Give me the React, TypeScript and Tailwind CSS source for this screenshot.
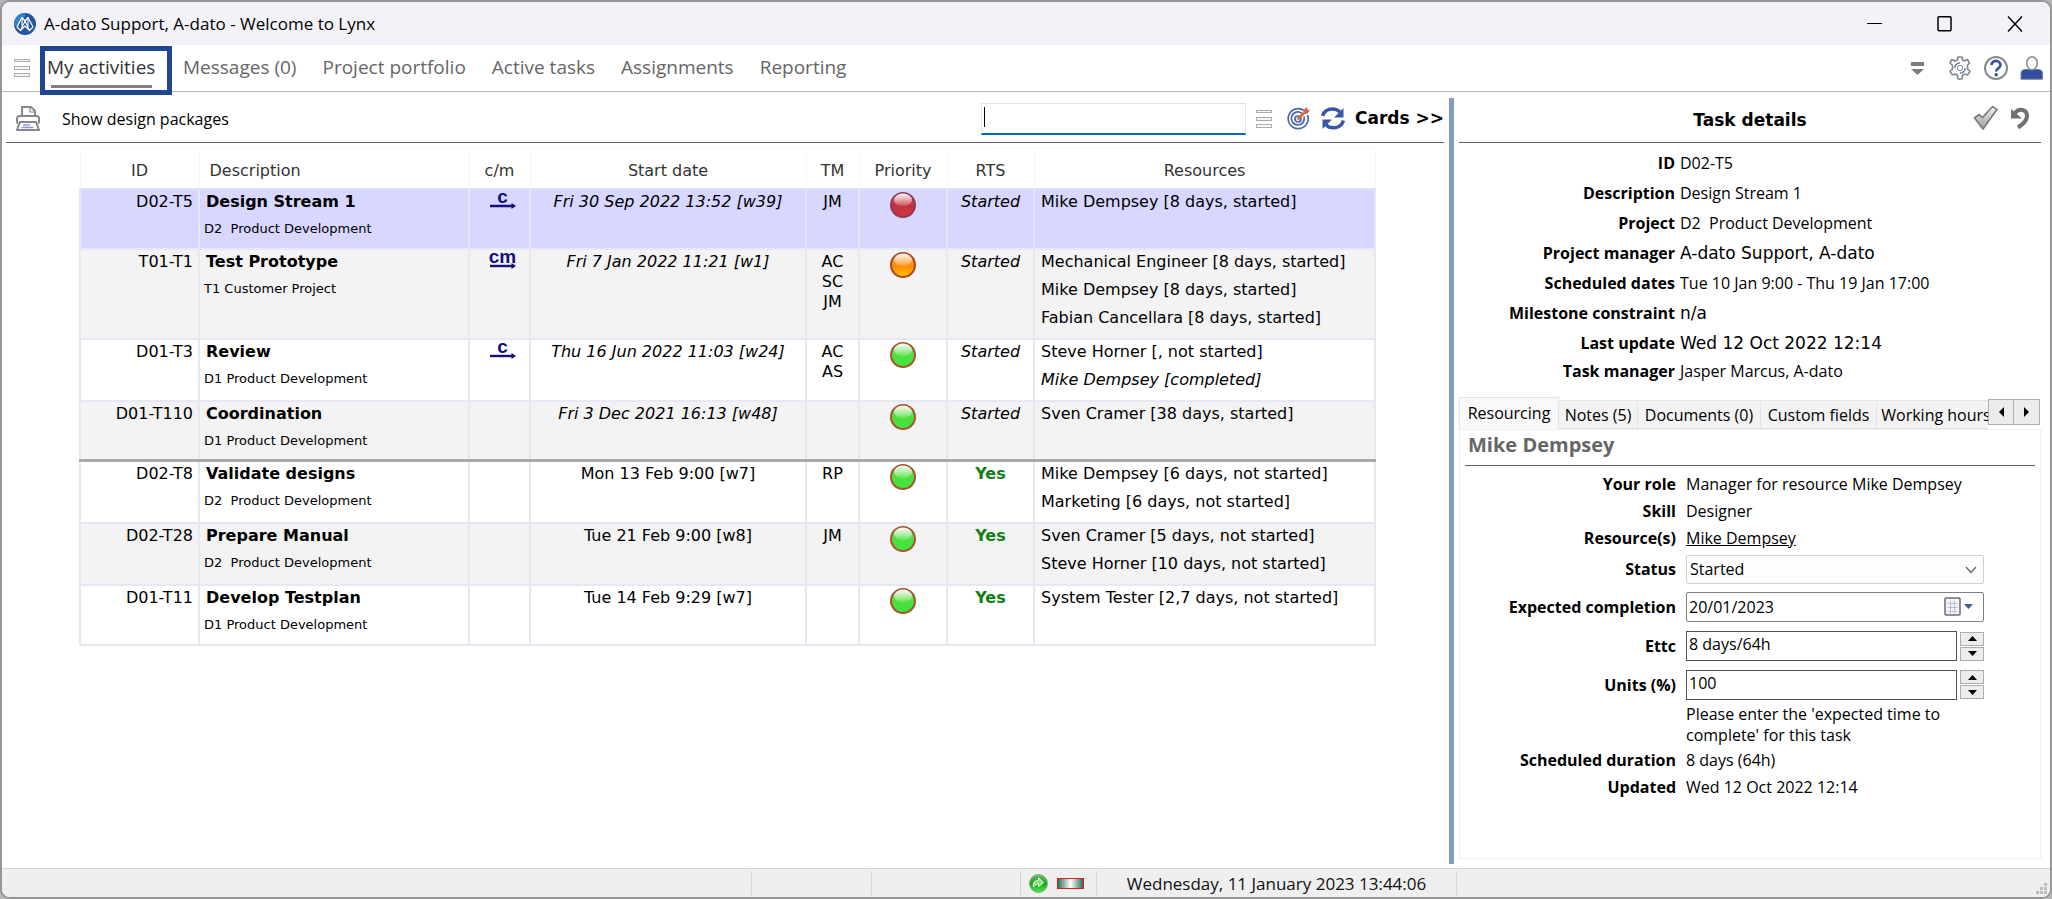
import type { ReactNode } from "react";

type Priority = "red" | "orange" | "green";

interface Task {
  id: string;
  name: string;
  project: string;
  chain?: "c" | "cm";
  start: string;
  managers: string[];
  priority: Priority;
  started: boolean;
  resources: { text: string; done?: boolean }[];
  height: string;
}

const tasks: Task[] = [
  { id: "D02-T5", name: "Design Stream 1", project: "D2\u00a0 Product Development", chain: "c", start: "Fri 30 Sep 2022 13:52 [w39]", managers: ["JM"], priority: "red", started: true, resources: [{ text: "Mike Dempsey [8 days, started]" }], height: "h-[60px]" },
  { id: "T01-T1", name: "Test Prototype", project: "T1 Customer Project", chain: "cm", start: "Fri 7 Jan 2022 11:21 [w1]", managers: ["AC", "SC", "JM"], priority: "orange", started: true, resources: [{ text: "Mechanical Engineer [8 days, started]" }, { text: "Mike Dempsey [8 days, started]" }, { text: "Fabian Cancellara [8 days, started]" }], height: "h-[90px]" },
  { id: "D01-T3", name: "Review", project: "D1 Product Development", chain: "c", start: "Thu 16 Jun 2022 11:03 [w24]", managers: ["AC", "AS"], priority: "green", started: true, resources: [{ text: "Steve Horner [, not started]" }, { text: "Mike Dempsey [completed]", done: true }], height: "h-[62px]" },
  { id: "D01-T110", name: "Coordination", project: "D1 Product Development", start: "Fri 3 Dec 2021 16:13 [w48]", managers: [], priority: "green", started: true, resources: [{ text: "Sven Cramer [38 days, started]" }], height: "h-[60px]" },
  { id: "D02-T8", name: "Validate designs", project: "D2\u00a0 Product Development", start: "Mon 13 Feb 9:00 [w7]", managers: ["RP"], priority: "green", started: false, resources: [{ text: "Mike Dempsey [6 days, not started]" }, { text: "Marketing [6 days, not started]" }], height: "h-[62px]" },
  { id: "D02-T28", name: "Prepare Manual", project: "D2\u00a0 Product Development", start: "Tue 21 Feb 9:00 [w8]", managers: ["JM"], priority: "green", started: false, resources: [{ text: "Sven Cramer [5 days, not started]" }, { text: "Steve Horner [10 days, not started]" }], height: "h-[62px]" },
  { id: "D01-T11", name: "Develop Testplan", project: "D1 Product Development", start: "Tue 14 Feb 9:29 [w7]", managers: [], priority: "green", started: false, resources: [{ text: "System Tester [2,7 days, not started]" }], height: "h-[60px]" },
];

const orbColours: Record<Priority, { rim: string; top: string; mid: string; low: string }> = {
  red: { rim: "#8f3a56", top: "#d8495a", mid: "#c2323c", low: "#cc3640" },
  orange: { rim: "#b0451f", top: "#f7a63a", mid: "#fb8a00", low: "#ffc400" },
  green: { rim: "#a8522f", top: "#74dd5c", mid: "#4adf3a", low: "#3fe545" },
};

function Orb({ priority }: { priority: Priority }) {
  const c = orbColours[priority];
  return (
    <svg width="26" height="26" viewBox="0 0 26 26" className="mx-auto block" role="img" aria-label={priority}>
      <defs>
        <linearGradient id={`body-${priority}`} x1="0" y1="0" x2="0" y2="1">
          <stop offset="0" stopColor={c.top} />
          <stop offset="0.55" stopColor={c.mid} />
          <stop offset="1" stopColor={c.low} />
        </linearGradient>
        <linearGradient id={`shine-${priority}`} x1="0" y1="0" x2="0" y2="1">
          <stop offset="0" stopColor="#fff" stopOpacity="0.95" />
          <stop offset="1" stopColor="#fff" stopOpacity="0.1" />
        </linearGradient>
      </defs>
      <circle cx="13" cy="13" r="12" fill={`url(#body-${priority})`} stroke={c.rim} strokeWidth="2" />
      <ellipse cx="13" cy="8" rx="9" ry="6.500" fill={`url(#shine-${priority})`} />
    </svg>
  );
}

function ChainMark({ kind }: { kind: "c" | "cm" }) {
  return (
    <div className="mx-auto flex w-[26px] flex-col items-center font-['Liberation_Sans',sans-serif] text-[19px] leading-[12px] font-bold text-[#14107c]">
      <span>{kind}</span>
      <svg width="26" height="6" viewBox="0 0 26 6">
        <path d="M0 3h24" stroke="#14107c" strokeWidth="2.400" />
        <path d="M21.500 0l4.500 3-4.500 3z" fill="#14107c" />
      </svg>
    </div>
  );
}

function Lines() {
  return (
    <svg width="16" height="18" viewBox="0 0 16 18" fill="#f4f5f7" stroke="#a9acb1">
      <rect x="0.5" y="0.5" width="15" height="2" />
      <rect x="0.5" y="7.5" width="15" height="3" />
      <rect x="0.5" y="14.5" width="15" height="3" />
    </svg>
  );
}

function Arrow({ dir }: { dir: "up" | "down" | "left" | "right" }) {
  const paths = { up: "M0 5L4.5 0 9 5z", down: "M0 0h9L4.5 5z", left: "M5 0v10L0 5z", right: "M0 0v10l5-5z" };
  const tall = dir === "left" || dir === "right";
  return (
    <svg width={tall ? 5 : 9} height={tall ? 10 : 5} fill="currentColor">
      <path d={paths[dir]} />
    </svg>
  );
}

function TitleBar() {
  return (
    <header className="flex h-[43px] shrink-0 items-center bg-[#f2f2f8] pl-3">
      <svg width="22" height="22" viewBox="0 0 22 22">
        <circle cx="11" cy="11" r="11" fill="#2456a4" />
        <path d="M0 11A11 11 0 0 1 11 0v3L2 14z" fill="#2f86c4" />
        <path d="M3 14L8 4.500l3 3.500 3-3.500 5 9.500" fill="none" stroke="#fff" strokeWidth="1.200" strokeLinejoin="round" />
        <path d="M8 4.500V14M14 4.500V14M3 14l3.500 3.500L11 8l4.500 9.500L19 14M6.500 17.500L11 13l4.500 4.500" fill="none" stroke="#fff" strokeWidth="1.100" />
      </svg>
      <h1 className="ml-2 text-[17px] text-black">A-dato Support, A-dato - Welcome to Lynx</h1>
      <div className="ml-auto flex gap-[10px] pr-[5px]">
        <button aria-label="Minimize" className="flex h-[43px] w-[60px] items-center justify-center">
          <svg width="16" height="16"><path d="M0 7.500h15" stroke="#000" strokeWidth="1.200" /></svg>
        </button>
        <button aria-label="Maximize" className="flex h-[43px] w-[60px] items-center justify-center">
          <svg width="16" height="16"><rect x="1" y="0.800" width="13" height="14" rx="1" fill="none" stroke="#000" strokeWidth="1.500" /></svg>
        </button>
        <button aria-label="Close" className="flex h-[43px] w-[60px] items-center justify-center">
          <svg width="16" height="16"><path d="M1 0.500l14 15M15 0.500l-14 15" stroke="#000" strokeWidth="1.400" /></svg>
        </button>
      </div>
    </header>
  );
}

function MenuBar() {
  const items = ["Messages (0)", "Project portfolio", "Active tasks", "Assignments", "Reporting"];
  return (
    <nav className="flex h-[47px] shrink-0 items-start border-b border-[#b8b8b8] text-[19px] leading-[26px]">
      <button aria-label="Menu" className="mt-[14px] ml-3"><Lines /></button>
      <div className="relative z-10 mt-px ml-[10px] h-[49px] w-[132px] shrink-0 border-[5px] border-[#1f4690]">
        <a href="#activities" className="flex h-full flex-col pl-[2px] text-[#333]">
          <span className="mt-[3px]">My activities</span>
          <span className="mt-[5px] ml-1 h-[3px] w-[101px] bg-[#808080]" />
        </a>
      </div>
      <div className="ml-[11px] flex gap-[26px] pt-[9px] text-[#666]">
        {items.map((t) => <a key={t} href="#tab">{t}</a>)}
      </div>
      <div className="ml-auto flex items-center pt-[11px] pr-[6px]">
        <button aria-label="Show more" className="mr-6">
          <svg width="14" height="15" fill="#7b7e82"><path d="M1 1h13v4H1zM1 8h13l-6.500 6z" /></svg>
        </button>
        <button aria-label="Settings" className="mr-3">
          <svg width="24" height="24" viewBox="0 0 24 24" fill="none">
            <path d="M10 1h4l.5 3 2 1 3-1.500 2 3.500-2 2v4l2.500 2.500-2.500 3.500-3-1-2 1.200-.5 3.800h-4l-.5-3.800-2-1.200-3 1L2 15.500 4.500 13V9.500L2 7l2-3.500L7 5l2.500-1z" stroke="#86898e" strokeWidth="1.700" strokeLinejoin="round" />
            <path d="M17.200 12A5.200 5.200 0 0 1 12 17.200M6.800 12A5.200 5.200 0 0 1 12 6.800" stroke="#4561b4" strokeWidth="1.200" />
            <circle cx="12" cy="12" r="2.700" stroke="#86898e" />
          </svg>
        </button>
        <button aria-label="Help" className="mr-3">
          <svg width="24" height="24" viewBox="0 0 24 24" fill="none">
            <circle cx="12" cy="12" r="11" stroke="#86898e" strokeWidth="2" />
            <path d="M7.500 9a4.500 4 0 1 1 7 3.200c-1.700 1.100-2.300 1.600-2.300 3.300" stroke="#314f9f" strokeWidth="2.600" />
            <circle cx="12.200" cy="18.800" r="1.700" fill="#314f9f" />
          </svg>
        </button>
        <button aria-label="Account">
          <svg width="24" height="24" viewBox="0 0 24 24">
            <path d="M1 23.200v-6c0-2.500 2-3.700 4-3.700h13.500c2 0 4 1.200 4 3.700v6z" fill="#314f9f" stroke="#70809e" />
            <ellipse cx="12" cy="7.300" rx="5.300" ry="6.500" fill="#fff" stroke="#86898e" strokeWidth="1.500" />
          </svg>
        </button>
      </div>
    </nav>
  );
}

function Toolbar() {
  return (
    <div className="mr-[5px] ml-1 flex h-[51px] shrink-0 items-center border-b border-[#606060] pt-[3px]">
      <button aria-label="Print" className="ml-[10px]">
        <svg width="24" height="25" viewBox="0 0 24 25" fill="none" stroke="#86898e" strokeWidth="2">
          <path d="M6 10V1h9l4 4v5" />
          <path d="M14 1v5h5" strokeWidth="1.200" />
          <path d="M2 17.500A2 2 0 0 1 1 16v-3.500A2.500 2.500 0 0 1 3.500 10h17a2.500 2.500 0 0 1 2.500 2.500V16a2 2 0 0 1-1 1.500" />
          <path d="M4 16h16l3 8H1z" fill="#fff" />
          <path d="M7 19h7M5.500 21.500h12" stroke="#8a9ccf" strokeWidth="1.500" />
        </svg>
      </button>
      <a href="#packages" className="ml-[22px] text-[16px] text-black">Show design packages</a>
      <div className="relative ml-auto">
        <input aria-label="Search" className="block h-8 w-[265px] border border-b-2 border-[#e3e3e3] border-b-[#0067c0] bg-white px-1 outline-none" />
        <span className="absolute top-1 left-[3px] h-5 w-px bg-black" />
      </div>
      <button aria-label="List options" className="ml-[10px]"><Lines /></button>
      <button aria-label="Focus" className="ml-[15px]">
        <svg width="23" height="23" viewBox="0 0 23 23" fill="none" stroke="#4a66b0" strokeWidth="1.700">
          <path d="M17 3.500A10 10 0 1 0 20.500 8" />
          <path d="M15 6.500A6.500 6.500 0 1 0 17 9.500" />
          <circle cx="11" cy="12" r="3" />
          <path d="M10.500 12.500L17 6" stroke="#d9694b" strokeWidth="2.600" />
          <path d="M16 7l.5-4L20 0l.5 2.500L23 3.500 20 7z" fill="#d9694b" stroke="none" />
        </svg>
      </button>
      <button aria-label="Refresh" className="ml-[11px]">
        <svg width="24" height="23" viewBox="0 0 24 23" fill="none" stroke="#3a57a7" strokeWidth="3.500">
          <path d="M1.500 9C3 4 7 2 11.500 2c3.500 0 6 1.500 7.500 3" />
          <path d="M22.500 13.500C21 18.500 17 20.800 12.500 20.800c-3.500 0-6-1.300-7.500-3" />
          <path d="M22.500 1v9.500H13z M1.500 22v-9.500H11z" fill="#3a57a7" stroke="none" />
        </svg>
      </button>
      <button className="ml-[10px] font-['DejaVu_Sans',sans-serif] text-[17px] font-bold text-black">Cards &gt;&gt;</button>
    </div>
  );
}

function TaskTable() {
  const cell = "border-2 border-[#e6e9f3] align-top";
  return (
    <table className="w-full table-fixed border-collapse font-['DejaVu_Sans',sans-serif] text-[16px] leading-5 text-black">
      <colgroup>
        <col className="w-[119px]" />
        <col className="w-[270px]" />
        <col className="w-[61px]" />
        <col className="w-[276px]" />
        <col className="w-[53px]" />
        <col className="w-[88px]" />
        <col className="w-[87px]" />
        <col />
      </colgroup>
      <thead>
        <tr className="h-10 text-[#333]">
          {["ID", "Description", "c/m", "Start date", "TM", "Priority", "RTS", "Resources"].map((h, i) => (
            <th key={h} className={`border border-b-2 border-[#f6f6fa] border-b-[#dbe3ee] pt-[5px] font-normal ${i === 1 ? "pl-[10px] text-left" : "text-center"}`}>{h}</th>
          ))}
        </tr>
      </thead>
      <tbody>
        {tasks.map((t, i) => {
          const bg = i === 0 ? "bg-[#d7d7ff]" : i % 2 ? "bg-[#f3f3f3]" : "bg-white";
          const edge = i === 3 ? "border-b-[3px] border-b-[#a9a9a9]" : "";
          const c = `${cell} ${i === 0 ? "border-[#d3d6f3]" : ""} ${edge}`;
          return (
            <tr key={t.id} className={`${t.height} ${bg}`}>
              <td className={`${c} pt-[2px] pr-[5px] text-right`}>{t.id}</td>
              <td className={`${c} pt-[2px] pl-[4px]`}>
                <div className="pl-[2px] font-bold">{t.name}</div>
                <div className="mt-[7px] text-[13px]">{t.project}</div>
              </td>
              <td className={`${c} pt-px pl-[6px]`}>{t.chain && <ChainMark kind={t.chain} />}</td>
              <td className={`${c} pt-[2px] text-center ${t.started ? "italic" : ""}`}>{t.start}</td>
              <td className={`${c} pt-[2px] text-center`}>{t.managers.map((m) => <div key={m}>{m}</div>)}</td>
              <td className={`${c} pt-[2px]`}><Orb priority={t.priority} /></td>
              <td className={`${c} pt-[2px] text-center`}>
                {t.started ? <em>Started</em> : <strong className="text-[#108010]">Yes</strong>}
              </td>
              <td className={`${c} pt-[2px] pl-[6px]`}>
                {t.resources.map((r) => (
                  <div key={r.text} className={`mb-2 last:mb-0 ${r.done ? "italic" : ""}`}>{r.text}</div>
                ))}
              </td>
            </tr>
          );
        })}
      </tbody>
    </table>
  );
}

function Spinner({ label }: { label: string }) {
  return (
    <div className="ml-[3px] flex flex-col gap-px">
      <button aria-label={`${label} up`} className="flex h-[14px] w-6 items-center justify-center border border-[#adadad] bg-[#ececec]"><Arrow dir="up" /></button>
      <button aria-label={`${label} down`} className="flex h-[14px] w-6 items-center justify-center border border-[#adadad] bg-[#ececec]"><Arrow dir="down" /></button>
    </div>
  );
}

function Row({ label, id, height, children }: { label: string; id?: string; height: string; children: ReactNode }) {
  return (
    <div className={`grid grid-cols-[216px_1fr] items-center gap-x-[10px] ${height}`}>
      {id ? <label htmlFor={id} className="text-right font-bold">{label}</label> : <span className="text-right font-bold">{label}</span>}
      <div className="flex items-center">{children}</div>
    </div>
  );
}

function Details() {
  const verdana = "font-['DejaVu_Sans',sans-serif] text-[17px]";
  const facts: [string, string, string][] = [
    ["ID", "D02-T5", ""],
    ["Description", "Design Stream 1", ""],
    ["Project", "D2\u00a0 Product Development", ""],
    ["Project manager", "A-dato Support, A-dato", verdana],
    ["Scheduled dates", "Tue 10 Jan 9:00 - Thu 19 Jan 17:00", ""],
    ["Milestone constraint", "n/a", verdana],
    ["Last update", "Wed 12 Oct 2022 12:14", verdana],
    ["Task manager", "Jasper Marcus, A-dato", ""],
  ];
  const tab = "h-[29px] shrink-0 border border-l-0 border-[#e5e5e5] bg-[#f3f3f3]";
  return (
    <aside className="flex w-[596px] shrink-0 flex-col pr-[9px] pl-[5px] text-[16px] leading-5 text-black">
      <div className="relative flex h-[51px] shrink-0 items-center justify-center border-b border-[#606060] pt-[5px]">
        <h2 className="font-['DejaVu_Sans',sans-serif] text-[17px] font-bold">Task details</h2>
        <div className="absolute top-[13px] right-[10px] flex gap-3">
          <button aria-label="Apply">
            <svg width="25" height="25" viewBox="0 0 25 25">
              <defs>
                <linearGradient id="tick" x1="0" y1="0" x2="0" y2="1">
                  <stop offset="0" stopColor="#f4f4f4" />
                  <stop offset="1" stopColor="#9c9c9c" />
                </linearGradient>
              </defs>
              <path d="M1.500 13L6 9.500l3.500 3L19.500 1.500l4.500 3L10 24z" fill="url(#tick)" stroke="#7c7c7c" strokeWidth="1.700" />
            </svg>
          </button>
          <button aria-label="Undo">
            <svg width="21" height="24" viewBox="0 0 21 24">
              <path d="M5 7C9 2 17 3 17 10c0 5-4 8-9 11.500" fill="none" stroke="#707070" strokeWidth="4" />
              <path d="M1 3v9.500h11z" fill="#707070" />
            </svg>
          </button>
        </div>
      </div>
      <dl className="pt-[5px]">
        {facts.map(([k, v, f]) => (
          <div key={k} className="grid h-[30px] grid-cols-[216px_1fr] items-center gap-x-[5px] last:h-[26px]">
            <dt className="text-right font-bold">{k}</dt>
            <dd className={`whitespace-pre ${f}`}>{v}</dd>
          </div>
        ))}
      </dl>
      <div className="mt-[13px] flex h-[32px] shrink-0 items-end overflow-hidden">
        <div role="tablist" className="flex min-w-0 flex-1 items-end overflow-hidden">
          <button role="tab" aria-selected="true" className="h-[32px] w-[100px] shrink-0 border border-b-0 border-[#e5e5e5] bg-[#f9f9f9] pb-[2px]">Resourcing</button>
          <button role="tab" className={`${tab} w-[79px]`}>Notes (5)</button>
          <button role="tab" className={`${tab} w-[123px]`}>Documents (0)</button>
          <button role="tab" className={`${tab} w-[116px]`}>Custom fields</button>
          <button role="tab" className={`${tab} w-[119px]`}>Working hours</button>
        </div>
        <div className="mr-px mb-[4px] flex">
          <button aria-label="Previous tabs" className="flex h-[26px] w-[26px] items-center justify-center border border-[#adadad] bg-[#ececec]"><Arrow dir="left" /></button>
          <button aria-label="Next tabs" className="-ml-px flex h-[26px] w-[27px] items-center justify-center border border-[#adadad] bg-[#ececec]"><Arrow dir="right" /></button>
        </div>
      </div>
      <section className="mb-[5px] flex-1 border border-[#efefef] px-[5px]">
        <h3 className="h-[36px] border-b border-[#606060] pt-[2px] pl-[3px] text-[20px] leading-[26px] font-bold text-[#666]">Mike Dempsey</h3>
        <div className="-ml-[5px] pt-1">
          <Row label="Your role" height="h-[27px]">Manager for resource Mike Dempsey</Row>
          <Row label="Skill" height="h-[27px]">Designer</Row>
          <Row label="Resource(s)" height="h-[27px]"><a href="#resource" className="underline">Mike Dempsey</a></Row>
          <Row label="Status" id="status" height="h-[36px]">
            <div className="relative w-[298px]">
              <select id="status" defaultValue="Started" className="block h-[29px] w-full appearance-none rounded-[2px] border border-[#d0d0d0] bg-[#fdfdfd] px-[3px]">
                <option>Started</option>
              </select>
              <svg width="12" height="8" className="pointer-events-none absolute top-[11px] right-[7px]"><path d="M1 1l5 5.500 5-5.500" fill="none" stroke="#606060" strokeWidth="1.200" /></svg>
            </div>
          </Row>
          <Row label="Expected completion" id="completion" height="h-[40px]">
            <div className="relative w-[298px]">
              <input id="completion" defaultValue="20/01/2023" className="block h-[30px] w-full rounded-[2px] border border-[#808080] bg-white px-[2px]" />
              <svg width="30" height="20" className="absolute top-[5px] right-[10px]">
                <rect x="1" y="1" width="15" height="17" rx="1" fill="#f4f4f8" stroke="#6f6a70" strokeWidth="1.500" />
                <path d="M3.500 6.500h10M3.500 10.500h10M3.500 14.500h10M6.500 3.500v13M10.500 3.500v13" stroke="#b9bfd8" />
                <path d="M20 7h9l-4.500 5z" fill="#3f5a8f" />
              </svg>
            </div>
          </Row>
          <Row label="Ettc" id="ettc" height="h-[38px]">
            <input id="ettc" defaultValue="8 days/64h" className="h-[30px] w-[271px] border border-[#505050] bg-white px-[2px] pb-1" />
            <Spinner label="Ettc" />
          </Row>
          <Row label="Units (%)" id="units" height="h-[39px]">
            <input id="units" defaultValue="100" className="h-[30px] w-[271px] border border-[#505050] bg-white px-[2px] pb-1" />
            <Spinner label="Units" />
          </Row>
          <div className="ml-[226px] w-[298px] leading-[21px]">Please enter the 'expected time to complete' for this task</div>
          <Row label="Scheduled duration" height="h-[27px]">8 days (64h)</Row>
          <Row label="Updated" height="h-[27px]">Wed 12 Oct 2022 12:14</Row>
        </div>
      </section>
    </aside>
  );
}

function StatusBar() {
  return (
    <footer className="flex h-[29px] shrink-0 border-t border-[#d5d5d5] bg-[#efefef] py-[2px] text-[17px] leading-[26px] text-[#111]">
      <div className="flex-1 border-r border-[#d5d5d5]" />
      <div className="w-[120px] border-r border-[#d5d5d5]" />
      <div className="w-[149px] border-r border-[#d5d5d5]" />
      <div className="flex w-[76px] items-center gap-[9px] border-r border-[#d5d5d5] pl-2">
        <svg width="19" height="19" viewBox="0 0 19 19">
          <defs>
            <linearGradient id="sync" x1="0" y1="0" x2="0" y2="1">
              <stop offset="0" stopColor="#6fbf6c" />
              <stop offset="0.5" stopColor="#16a31c" />
              <stop offset="1" stopColor="#57e64a" />
            </linearGradient>
          </defs>
          <circle cx="9.500" cy="9.500" r="9" fill="url(#sync)" stroke="#7fae7c" />
          <path d="M4.500 13C3.500 8.500 6 6.500 9.500 6.500V4l5 4.500-5 4V10C7.500 9.800 5.800 10.500 4.500 13z" fill="#7fe070" stroke="#fff" strokeWidth="1" />
        </svg>
        <span className="h-[11px] w-[27px] border border-[#f01818] bg-linear-to-r from-[#22735a] via-white to-[#22735a]" />
      </div>
      <div className="w-[360px] border-r border-[#d5d5d5] text-center whitespace-nowrap">Wednesday, 11 January 2023 13:44:06</div>
      <div className="flex w-[593px] items-end justify-end pr-[2px]">
        <svg width="12" height="12" fill="#bdbdbd"><path d="M8 0h3v3H8zM4 4h3v3H4zM8 4h3v3H8zM0 8h3v3H0zM4 8h3v3H4zM8 8h3v3H8z" /></svg>
      </div>
    </footer>
  );
}

export default function App() {
  return (
    <div className="min-h-screen bg-[#b4b4b4] font-['Open_Sans','Noto_Sans',sans-serif]">
      <div className="flex min-h-screen flex-col overflow-hidden rounded-[10px] border-2 border-[#969696] bg-white">
        <TitleBar />
        <MenuBar />
        <div className="flex flex-1 pb-1">
          <main className="flex min-w-0 flex-1 flex-col">
            <Toolbar />
            <div className="pt-[5px] pr-[73px] pb-10 pl-[77px]"><TaskTable /></div>
          </main>
          <div className="mt-[6px] w-[5px] shrink-0 bg-[#829dbd]" />
          <Details />
        </div>
        <StatusBar />
      </div>
    </div>
  );
}
